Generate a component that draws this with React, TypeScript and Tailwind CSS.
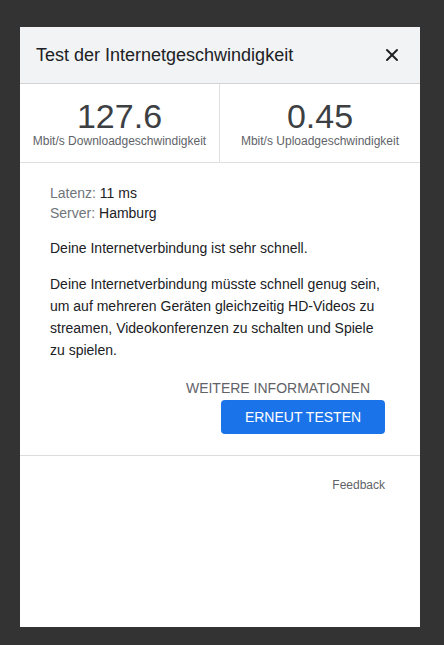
import { X } from 'lucide-react';

const font = { fontFamily: '"Liberation Sans", Arial, sans-serif' };

export default function App() {
  return (
    <div className="min-h-[645px] w-full bg-[#333333] pt-[27px]" style={font}>
      <div className="ml-[20px] flex h-[600px] w-[400px] flex-col bg-white">
        <div className="flex h-[57px] items-center justify-between border-b border-[#d2d3d5] bg-[#f1f3f4] pl-4 pr-[18px]">
          <h1 className="text-[18px] text-[#202124]">Test der Internetgeschwindigkeit</h1>
          <X className="h-[20px] w-[20px] text-[#202124]" strokeWidth={2.4} />
        </div>

        <div className="grid h-[79px] grid-cols-2 border-b border-[#e0e0e0]">
          <div className="flex flex-col items-center justify-center border-r border-[#e0e0e0] pt-[2px]">
            <span className="text-[34px] leading-[34px] text-[#3c4043]">127.6</span>
            <span className="text-[12px] leading-[16px] text-[#5f6368]">Mbit/s Downloadgeschwindigkeit</span>
          </div>
          <div className="flex flex-col items-center justify-center pt-[2px]">
            <span className="text-[34px] leading-[34px] text-[#3c4043]">0.45</span>
            <span className="text-[12px] leading-[16px] text-[#5f6368]">Mbit/s Uploadgeschwindigkeit</span>
          </div>
        </div>

        <div className="pl-[30px] pr-[35px] pt-[20px] text-[14px] text-[#202124]">
          <div className="leading-[20px]">
            <p><span className="text-[#70757a]">Latenz:</span> 11 ms</p>
            <p><span className="text-[#70757a]">Server:</span> Hamburg</p>
          </div>
          <p className="mt-[14px] leading-[22px]">Deine Internetverbindung ist sehr schnell.</p>
          <p className="mt-[14px] leading-[22px]">
            Deine Internetverbindung müsste schnell genug sein, um auf mehreren Geräten gleichzeitig HD-Videos zu streamen, Videokonferenzen zu schalten und Spiele zu spielen.
          </p>
          <div className="mt-[18px] flex flex-col items-end">
            <span className="mr-[15px] text-[14px] leading-[18px] text-[#5f6368]">WEITERE INFORMATIONEN</span>
            <button className="mt-[3px] h-[34px] w-[164px] rounded-[4px] bg-[#1a73e8] text-[14px] text-white">
              ERNEUT TESTEN
            </button>
          </div>
        </div>

        <div className="mt-[21px] border-t border-[#dadce0] pr-[35px] pt-[20px] text-right text-[12px] text-[#5f6368]">
          Feedback
        </div>
      </div>
    </div>
  );
}
